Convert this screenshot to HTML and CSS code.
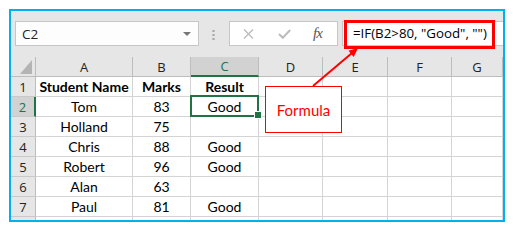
FILE: index.html
```html
<!DOCTYPE html>
<html>
<head>
<meta charset="utf-8">
<link rel="stylesheet" href="styles.css">
</head>
<body>
<div class="frame">
  <div class="toolbar">
    <div class="namebox"><span>C2</span><span class="caret"></span></div>
    <div class="grip"></div>
    <div class="fxbox">
      <svg class="ico-x" width="11" height="10" viewBox="0 0 11 10"><path d="M1 0.5 L10 9.5 M10 0.5 L1 9.5" stroke="#bcbcbc" stroke-width="1.4" fill="none"/></svg>
      <svg class="ico-check" width="13" height="10" viewBox="0 0 13 10"><path d="M1 5 L4.8 8.8 L12.2 1" stroke="#bcbcbc" stroke-width="2" fill="none"/></svg>
      <span class="fx">fx</span>
    </div>
    <div class="formula">=IF(B2&gt;80, "Good", "")</div>
  </div>
  <div class="sheet">
    <div class="h corner"></div>
    <div class="h">A</div><div class="h">B</div><div class="h sel-col">C</div><div class="h">D</div><div class="h">E</div><div class="h">F</div><div class="h">G</div>

    <div class="r">1</div><div class="c b">Student Name</div><div class="c b">Marks</div><div class="c b">Result</div><div class="c"></div><div class="c"></div><div class="c"></div><div class="c"></div>
    <div class="r sel-row">2</div><div class="c">Tom</div><div class="c">83</div><div class="c active">Good</div><div class="c"></div><div class="c"></div><div class="c"></div><div class="c"></div>
    <div class="r">3</div><div class="c">Holland</div><div class="c">75</div><div class="c"></div><div class="c"></div><div class="c"></div><div class="c"></div><div class="c"></div>
    <div class="r">4</div><div class="c">Chris</div><div class="c">88</div><div class="c">Good</div><div class="c"></div><div class="c"></div><div class="c"></div><div class="c"></div>
    <div class="r">5</div><div class="c">Robert</div><div class="c">96</div><div class="c">Good</div><div class="c"></div><div class="c"></div><div class="c"></div><div class="c"></div>
    <div class="r">6</div><div class="c">Alan</div><div class="c">63</div><div class="c"></div><div class="c"></div><div class="c"></div><div class="c"></div><div class="c"></div>
    <div class="r">7</div><div class="c">Paul</div><div class="c">81</div><div class="c">Good</div><div class="c"></div><div class="c"></div><div class="c"></div><div class="c"></div>
    <div class="r"></div><div class="c"></div><div class="c"></div><div class="c"></div><div class="c"></div><div class="c"></div><div class="c"></div><div class="c"></div>
  </div>
</div>
<div class="highlight"></div>
<div class="callout">Formula</div>
<svg class="arrow" width="513" height="229" viewBox="0 0 513 229">
  <line x1="313" y1="86" x2="352" y2="53" stroke="#ff0000" stroke-width="2"/>
  <polygon points="358,48 353.7,56.9 348.5,50.7" fill="#ff0000"/>
</svg>
</body>
</html>
```

FILE: styles.css
```css
* { box-sizing: border-box; }
body {
  margin: 0;
  background: #ffffff;
  width: 513px;
  height: 229px;
  position: relative;
  overflow: hidden;
}
.frame {
  margin: 9px 0 0 9px;
  width: 496px;
  height: 213px;
  border: 2px solid #00b0f0;
  background: #e6e6e6;
  display: flex;
  flex-direction: column;
}
.toolbar {
  height: 46px;
  flex: none;
  display: flex;
  align-items: flex-start;
  padding: 10px 0 0 4px;
}
.namebox {
  width: 184px;
  height: 25px;
  background: #fdfdfd;
  border: 1px solid #c6c6c6;
  display: flex;
  align-items: center;
  justify-content: space-between;
  padding: 0 7px 0 6px;
  font: 13.5px "Open Sans", sans-serif;
  color: #222;
}
.caret {
  width: 0;
  height: 0;
  border-left: 4px solid transparent;
  border-right: 4px solid transparent;
  border-top: 4px solid #767676;
}
.grip {
  width: 3px;
  height: 11px;
  margin: 8px 14px 0 13px;
  background: radial-gradient(circle, #a8a8a8 1px, transparent 1.3px) 0 0 / 3px 4px repeat-y;
}
.fxbox {
  width: 109px;
  height: 25px;
  background: #fff;
  border: 1px solid #c6c6c6;
  display: flex;
  align-items: center;
  padding-left: 13px;
}
.ico-x { margin-right: 24px; }
.ico-check { margin-right: 22px; }
.fx {
  font: italic 15px "Liberation Serif", serif;
  color: #555;
  letter-spacing: -1px;
}
.formula {
  margin-left: 4px;
  flex: 1;
  height: 25px;
  background: #fff;
  border: 1px solid #c6c6c6;
  border-right: none;
  padding-left: 10px;
  font: 13.3px "Open Sans", sans-serif;
  line-height: 23px;
  color: #000;
  white-space: nowrap;
}
.sheet {
  flex: 1;
  display: grid;
  grid-template-columns: 25px 97px 58px 68px 64px 65px 64px 1fr;
  grid-template-rows: repeat(9, 20px);
  overflow: hidden;
  background: #fff;
}
.h, .r {
  background: #e6e6e6;
  border-right: 1px solid #bdbdbd;
  border-bottom: 1px solid #bdbdbd;
  display: flex;
  align-items: center;
  justify-content: center;
  font: 13px "Open Sans", sans-serif;
  color: #222;
}
.r { border-bottom-color: #c9c9c9; }
.corner { position: relative; }
.corner::after {
  content: "";
  position: absolute;
  right: 3px;
  bottom: 2px;
  width: 12px;
  height: 14px;
  background: #b4b4b4;
  clip-path: polygon(100% 0, 100% 100%, 0 100%);
}
.sel-col {
  background: #d2d2d2;
  color: #217346;
  border-bottom: 2px solid #217346;
}
.sel-row {
  background: #d2d2d2;
  color: #217346;
  border-right: 2px solid #217346;
}
.c {
  border-right: 1px solid #d4d4d4;
  border-bottom: 1px solid #d4d4d4;
  display: flex;
  align-items: center;
  justify-content: center;
  font: 14px "Lato", sans-serif;
  color: #000;
  white-space: nowrap;
}
.b { font-weight: bold; }
.active { position: relative; }
.active::after {
  content: "";
  position: absolute;
  left: -1px;
  right: -1px;
  top: -2px;
  bottom: -1px;
  border: 2px solid #217346;
}
.active::before {
  content: "";
  position: absolute;
  right: -3px;
  bottom: -2px;
  width: 6px;
  height: 6px;
  background: #217346;
  outline: 1px solid #fff;
  z-index: 2;
}
.highlight {
  position: absolute;
  left: 344px;
  top: 20px;
  width: 151px;
  height: 29px;
  border: 3px solid #ff0000;
}
.callout {
  position: absolute;
  left: 265px;
  top: 86px;
  width: 77px;
  height: 47px;
  background: #fff;
  border: 1px solid #ff0000;
  display: flex;
  align-items: center;
  justify-content: center;
  font: 15px "Lato", sans-serif;
  color: #ff0000;
}
.arrow {
  position: absolute;
  left: 0;
  top: 0;
  pointer-events: none;
}
```
